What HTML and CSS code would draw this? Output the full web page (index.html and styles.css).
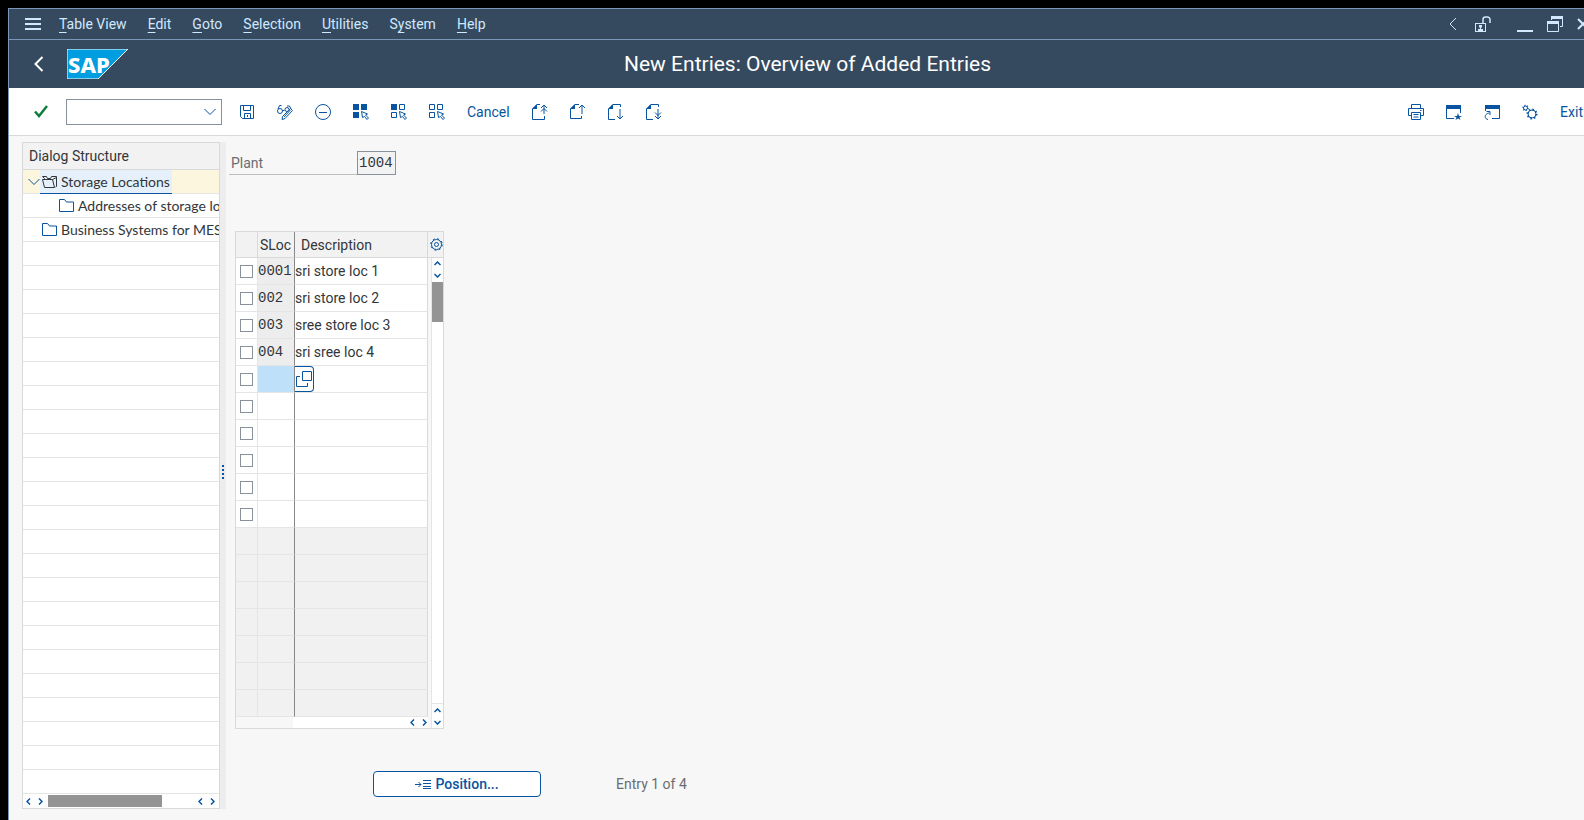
FILE: index.html
```html
<!DOCTYPE html>
<html lang="en">
<head>
<meta charset="utf-8">
<title>New Entries: Overview of Added Entries</title>
<link rel="stylesheet" href="styles.css">
</head>
<body>
<div class="window">
  <nav class="menubar">
    <button class="menu-toggle" aria-label="Menu"><svg width="16" height="12" viewBox="0 0 16 12"><path d="M0 1h16M0 6h16M0 11h16" stroke-width="2"/></svg></button>
    <button class="menu-item"><u>T</u>able View</button>
    <button class="menu-item"><u>E</u>dit</button>
    <button class="menu-item"><u>G</u>oto</button>
    <button class="menu-item"><u>S</u>election</button>
    <button class="menu-item"><u>U</u>tilities</button>
    <button class="menu-item">S<u>y</u>stem</button>
    <button class="menu-item"><u>H</u>elp</button>
    <div class="window-controls">
      <button aria-label="Collapse"><svg width="8" height="14" viewBox="0 0 8 14"><path d="M7 1L1 7l6 6"/></svg></button>
      <button class="lock" aria-label="Unlocked"><svg width="16" height="17" viewBox="0 0 16 17"><rect x=".5" y="7.5" width="10" height="8"/><path d="M8 7V3.500a2.500 2.500 0 0 1 2.500-2.500h2a2.500 2.500 0 0 1 2.500 2.500V7" stroke-width="1.500"/><path class="solid" d="M4 9h3v2.500H4zM3 13h5v2H3zM5 11h1v3H5z"/></svg></button>
      <button class="minimize" aria-label="Minimize"><svg width="16" height="17" viewBox="0 0 16 17"><path d="M0 15h16" stroke-width="2"/></svg></button>
      <button aria-label="Restore"><svg width="16" height="16" viewBox="0 0 16 16"><path d="M4 1.500h12" stroke-width="3"/><path d="M15.500 2v8.500H13M4.500 2v2"/><path d="M0 6.500h12" stroke-width="3"/><path d="M.5 7v8.500h11V7"/></svg></button>
      <button class="close" aria-label="Close"><svg width="12" height="12" viewBox="0 0 12 12"><path d="M1 1l10 10M11 1L1 11" stroke-width="2"/></svg></button>
    </div>
  </nav>

  <header class="titlebar">
    <button class="back" aria-label="Back"><svg width="10" height="16" viewBox="0 0 10 16"><path d="M8.500 1L1.500 8l7 7" stroke-width="2"/></svg></button>
    <svg class="logo" width="61" height="30" viewBox="0 0 61 30" role="img" aria-label="SAP"><path d="M0 0h61L31 30H0z" fill="#009de0"/><text x="1" y="24">SAP</text></svg>
    <h1>New Entries: Overview of Added Entries</h1>
  </header>

  <div class="toolbar">
    <button class="confirm" aria-label="Enter"><svg width="14" height="13" viewBox="0 0 14 13"><path d="M1 6.500l4 4.500L13 1" stroke-width="2.500"/></svg></button>
    <div class="command">
      <input type="text" aria-label="Command">
      <button aria-label="Show history"><svg width="12" height="8" viewBox="0 0 12 8"><path d="M.5 1L6 6.500 11.500 1"/></svg></button>
    </div>
    <button aria-label="Save"><svg width="16" height="16" viewBox="0 0 16 16"><path d="M1.500 1.500h13v13H3.500l-2-2zM4.500 1.500v5h7v-5M5.500 14.500v-5h6v5M8.500 11v2"/></svg></button>
    <button aria-label="Display/Change"><svg width="16" height="16" viewBox="0 0 16 16"><circle cx="3" cy="7" r="2.500"/><path d="M1 5l1.500-3.500h2M5.500 6.500h2M10 2h2.500L14 5"/><circle cx="10" cy="5.500" r="2"/><path d="M13.500 4.500l2 2-7.500 8-3 1 .5-3zM7 13l6.500-7"/></svg></button>
    <button aria-label="Delete"><svg width="16" height="16" viewBox="0 0 16 16"><circle cx="8" cy="8" r="7.500"/><path d="M4 8.500h8"/></svg></button>
    <button aria-label="Select All"><svg width="16" height="16" viewBox="0 0 16 16"><path class="solid" d="M0 0h6v6H0zM8 0h6v6H8zM0 8h6v6H0z"/><path d="M8.500 7.500l6 2.500-2 1 3 3-1.500 1.500-2.500-3-2 1z"/></svg></button>
    <button aria-label="Select Block"><svg width="16" height="16" viewBox="0 0 16 16"><path class="solid" d="M0 0h6v6H0z"/><path d="M8.500.5h5v5h-5zM.5 8.500h5v5h-5zM8.500 7.500l6 2.500-2 1 3 3-1.500 1.500-2.500-3-2 1z"/></svg></button>
    <button aria-label="Deselect All"><svg width="16" height="16" viewBox="0 0 16 16"><path d="M.5.500h5v5h-5zM8.500.5h5v5h-5zM.5 8.500h5v5h-5zM8.500 7.500l6 2.500-2 1 3 3-1.500 1.500-2.500-3-2 1z"/></svg></button>
    <button>Cancel</button>
    <button aria-label="First Page"><svg width="16" height="16" viewBox="0 0 16 16"><path class="solid" d="M0 5L5 0v5z"/><path d="M8 .5H5L.5 5v10.500h12V12M12 10V1M9 4l3-3 3 3M9 7.500l3-3 3 3"/></svg></button>
    <button aria-label="Previous Page"><svg width="16" height="16" viewBox="0 0 16 16"><path class="solid" d="M0 5L5 0v5z"/><path d="M9 .5H5L.5 5v9.500h11V12M12 10V1M9 4l3-3 3 3"/></svg></button>
    <button aria-label="Next Page"><svg width="16" height="16" viewBox="0 0 16 16"><path class="solid" d="M0 5L5 0v5z"/><path d="M12.500 3V.5H5L.5 5v10.500H7M12 5v10M9 12l3 3 3-3"/></svg></button>
    <button aria-label="Last Page"><svg width="16" height="16" viewBox="0 0 16 16"><path class="solid" d="M0 5L5 0v5z"/><path d="M12.500 3V.5H5L.5 5v10.500H7M12 5v10M9 12l3 3 3-3M9 8.500l3 3 3-3"/></svg></button>
    <div class="toolbar-end">
      <button aria-label="Print"><svg width="16" height="16" viewBox="0 0 16 16"><path d="M3.500 4V.5h9V4M3 11.500H.5v-7h15v7H13M3.500 8.500h9v7h-9zM5.500 10.500h5M5.500 13h5M12 6.500h1.500"/></svg></button>
      <button aria-label="New GUI Window"><svg width="16" height="16" viewBox="0 0 16 16"><path class="solid" d="M0 1h15v4H0zM12 9l1 3h3l-2.500 1.500 1 2.500-2.500-1.500L9.500 16l1-2.500L8 12h3z"/><path d="M.5 3v11.500H8M14.500 3v6"/></svg></button>
      <button aria-label="Create Shortcut"><svg width="16" height="16" viewBox="0 0 16 16"><path class="solid" d="M1 1h15v4H1z"/><path d="M1.500 3v4M15.500 3v11.500H8M4 15.500C1 15 .5 12 2 10.500c1-1 2-1.500 3.500-1.500M2.500 7.500h3.500V11"/></svg></button>
      <button aria-label="Customize Local Layout"><svg width="16" height="16" viewBox="0 0 16 16"><circle cx="10" cy="10" r="4"/><circle cx="10" cy="10" r="4.500" stroke-dasharray="1.500 2" stroke-width="2"/><circle cx="3.500" cy="4" r="2"/><circle cx="3.500" cy="4" r="2.500" stroke-dasharray="1 1.600" stroke-width="1.500"/></svg></button>
      <button>Exit</button>
    </div>
  </div>

  <main class="workspace">
    <aside class="structure">
      <h2>Dialog Structure</h2>
      <ul class="tree">
        <li class="node current">
          <button class="expander" aria-label="Collapse node"><svg width="12" height="8" viewBox="0 0 12 8"><path d="M.5 1L6 6.500 11.500 1"/></svg></button>
          <a class="selected" href="#"><svg width="15" height="13" viewBox="0 0 15 13"><path d="M2.500 5V3.500L.5 1.500h4l1 2h3l1-2h5v10l-1 .5M.5 4.500h10l2 8h-10zM10.500 4.500l4-2"/></svg>Storage Locations</a>
        </li>
        <li class="node child"><a href="#"><svg width="15" height="13" viewBox="0 0 15 13"><path d="M.5.500h5l2 2.500h7v9.500H.5z"/></svg>Addresses of storage locations</a></li>
        <li class="node leaf"><a href="#"><svg width="15" height="13" viewBox="0 0 15 13"><path d="M.5.500h5l2 2.500h7v9.500H.5z"/></svg>Business Systems for MES</a></li>
      </ul>
      <div class="hscroll">
        <button aria-label="Scroll left"><svg width="5" height="7" viewBox="0 0 5 7"><path d="M4 .5L1 3.500l3 3"/></svg></button>
        <button aria-label="Scroll right"><svg width="5" height="7" viewBox="0 0 5 7"><path d="M1 .5l3 3-3 3"/></svg></button>
        <div class="track"><div class="thumb"></div></div>
        <button aria-label="Scroll left"><svg width="5" height="7" viewBox="0 0 5 7"><path d="M4 .5L1 3.500l3 3"/></svg></button>
        <button aria-label="Scroll right"><svg width="5" height="7" viewBox="0 0 5 7"><path d="M1 .5l3 3-3 3"/></svg></button>
      </div>
    </aside>
    <div class="splitter"><svg width="2" height="14" viewBox="0 0 2 14"><path class="solid" d="M0 0h2v2H0zM0 4h2v2H0zM0 8h2v2H0zM0 12h2v2H0z"/></svg></div>

    <section class="content">
      <div class="field">
        <label for="plant">Plant</label>
        <input id="plant" type="text" value="1004" readonly>
      </div>

      <div class="grid">
        <div class="grid-main">
          <table>
            <thead><tr><th class="pick"></th><th class="sloc">SLoc</th><th class="desc">Description</th></tr></thead>
            <tbody>
              <tr class="filled"><td><input type="checkbox" aria-label="Select row 1"></td><td>0001</td><td>sri store loc 1</td></tr>
              <tr class="filled"><td><input type="checkbox" aria-label="Select row 2"></td><td>002</td><td>sri store loc 2</td></tr>
              <tr class="filled"><td><input type="checkbox" aria-label="Select row 3"></td><td>003</td><td>sree store loc 3</td></tr>
              <tr class="filled"><td><input type="checkbox" aria-label="Select row 4"></td><td>004</td><td>sri sree loc 4</td></tr>
              <tr class="active"><td><input type="checkbox" aria-label="Select row 5"></td><td></td><td><button class="value-help" aria-label="Value help"><svg width="16" height="16" viewBox="0 0 16 16"><path d="M6.500.5h9v9h-9zM4 5.500H.5v10h11V12"/></svg></button></td></tr>
              <tr><td><input type="checkbox" aria-label="Select row 6"></td><td></td><td></td></tr>
              <tr><td><input type="checkbox" aria-label="Select row 7"></td><td></td><td></td></tr>
              <tr><td><input type="checkbox" aria-label="Select row 8"></td><td></td><td></td></tr>
              <tr><td><input type="checkbox" aria-label="Select row 9"></td><td></td><td></td></tr>
              <tr><td><input type="checkbox" aria-label="Select row 10"></td><td></td><td></td></tr>
              <tr class="unused"><td></td><td></td><td></td></tr>
              <tr class="unused"><td></td><td></td><td></td></tr>
              <tr class="unused"><td></td><td></td><td></td></tr>
              <tr class="unused"><td></td><td></td><td></td></tr>
              <tr class="unused"><td></td><td></td><td></td></tr>
              <tr class="unused"><td></td><td></td><td></td></tr>
              <tr class="unused"><td></td><td></td><td></td></tr>
            </tbody>
          </table>
          <div class="grid-hscroll">
            <button aria-label="Scroll left"><svg width="5" height="7" viewBox="0 0 5 7"><path d="M4 .5L1 3.500l3 3"/></svg></button>
            <button aria-label="Scroll right"><svg width="5" height="7" viewBox="0 0 5 7"><path d="M1 .5l3 3-3 3"/></svg></button>
          </div>
        </div>
        <div class="grid-side">
          <button class="settings" aria-label="Table settings"><svg width="13" height="13" viewBox="0 0 13 13"><circle cx="6.500" cy="6.500" r="5"/><circle cx="6.500" cy="6.500" r="5.800" stroke-dasharray="2 2.560"/><circle cx="6.500" cy="6.500" r="2"/></svg></button>
          <div class="vscroll">
            <button aria-label="Scroll up"><svg width="7" height="5" viewBox="0 0 7 5"><path d="M.5 4l3-3 3 3"/></svg></button>
            <button aria-label="Scroll down"><svg width="7" height="5" viewBox="0 0 7 5"><path d="M.5 1l3 3 3-3"/></svg></button>
            <div class="vtrack"><div class="vthumb"></div></div>
            <button aria-label="Scroll up"><svg width="7" height="5" viewBox="0 0 7 5"><path d="M.5 4l3-3 3 3"/></svg></button>
            <button aria-label="Scroll down"><svg width="7" height="5" viewBox="0 0 7 5"><path d="M.5 1l3 3 3-3"/></svg></button>
          </div>
        </div>
      </div>

      <div class="footer">
        <button class="position"><svg width="16" height="9" viewBox="0 0 16 9"><path d="M0 4.500h6M3.500 2L6 4.500 3.500 7M8 .5h8M8 3.500h8M8 6.500h8M8 8.500h8"/></svg>Position...</button>
        <span>Entry 1 of 4</span>
      </div>
    </section>
  </main>
</div>
</body>
</html>
```
FILE: styles.css
```css
* { box-sizing: border-box; }

body {
  margin: 0;
  background: #000;
  color: #32363a;
  font: 14px/20px Roboto, "Noto Sans", sans-serif;
  overflow: hidden;
}

button {
  display: flex;
  align-items: center;
  justify-content: center;
  padding: 0;
  border: 0;
  background: none;
  color: inherit;
  font: inherit;
}

svg {
  display: block;
  flex: none;
  fill: none;
  stroke: currentColor;
}

.solid { fill: currentColor; stroke: none; }

/* The window runs past the right edge of the screen. */
.window {
  display: flex;
  flex-direction: column;
  min-height: calc(100vh - 8px);
  margin: 8px -22px 0 8px;
  border: solid #7a96b8;
  border-width: 1px 0 0 1px;
  background: #f7f7f7;
}

.menubar {
  display: flex;
  align-items: center;
  gap: 21px;
  height: 31px;
  padding: 0 17px 0 16px;
  border-bottom: 1px solid #7a96b8;
  background: #354a5f;
  color: #d1e8ff;
}

.menu-toggle { margin-right: -3px; }
.menu-item { display: block; white-space: nowrap; }
.menu-item u { text-underline-offset: 3px; }

.window-controls {
  display: flex;
  align-items: center;
  gap: 14px;
  margin-left: auto;
}

.lock { margin-left: 4px; }
.minimize { margin-left: 12px; }

.titlebar {
  display: grid;
  grid-template-columns: 25px 61px 1fr 119px;
  align-items: center;
  height: 48px;
  padding-left: 25px;
  column-gap: 8px;
  background: #354a5f;
  color: #fff;
}

.back { justify-content: flex-start; }

.logo text {
  fill: #fff;
  stroke: none;
  font: 800 22px "Noto Sans", "Open Sans", sans-serif;
}

.titlebar h1 {
  margin: 0;
  font-size: 21px;
  font-weight: 400;
  line-height: 24px;
  text-align: center;
}

.toolbar {
  display: flex;
  align-items: center;
  gap: 22px;
  height: 48px;
  padding: 0 23px 0 25px;
  border-bottom: 1px solid #d9d9d9;
  background: #fff;
  color: #0854a0;
}

.confirm { margin-right: -4px; color: #107e3e; }

.command {
  display: flex;
  width: 156px;
  height: 26px;
  margin-right: -5px;
  border: 1px solid #89919a;
}

.command input {
  flex: 1;
  min-width: 0;
  border: 0;
  background: none;
  font: inherit;
}

.command button { width: 22px; }

.toolbar-end {
  display: flex;
  gap: 22px;
  margin-left: auto;
}

.workspace {
  display: flex;
  flex: 1;
  padding: 6px 0 11px 13px;
}

.structure {
  display: flex;
  flex-direction: column;
  width: 198px;
  border: 1px solid #d9d9d9;
  background: #fff;
}

.structure h2 {
  height: 27px;
  margin: 0;
  padding-left: 6px;
  border-bottom: 1px solid #d9d9d9;
  background: #f2f2f2;
  font-size: 14px;
  font-weight: 400;
  line-height: 27px;
}

.tree {
  flex: 1;
  margin: 0;
  padding: 0;
  overflow: hidden;
  list-style: none;
  font-family: Lato, Roboto, sans-serif;
  background: repeating-linear-gradient(#fff 0 23px, #e5e5e5 23px 24px);
}

.node { display: flex; height: 24px; border-bottom: 1px solid #e5e5e5; }
.current { background: #fcf6df; }
.child { padding-left: 36px; }
.leaf { padding-left: 19px; }
.expander { width: 17px; padding-left: 5px; color: #0854a0; }

.node a {
  display: flex;
  align-items: center;
  gap: 4px;
  color: #32363a;
  text-decoration: none;
  white-space: nowrap;
}

.node a svg { color: #0854a0; }

.node .selected {
  height: 24px;
  padding: 0 2px;
  border-bottom: 1px solid #0854a0;
  background: #e5f0fa;
}

.node .selected svg { color: #32363a; }

.hscroll {
  display: flex;
  align-items: center;
  gap: 7px;
  height: 14px;
  padding: 0 4px 0 3px;
  color: #0854a0;
}

.track { flex: 1; height: 12px; margin-left: -2px; }
.thumb { width: 80%; height: 12px; background: #949494; }

.hscroll svg, .vscroll svg, .grid-hscroll svg { stroke-width: 1.5; }

.splitter {
  display: flex;
  align-items: center;
  justify-content: center;
  width: 6px;
  padding-bottom: 7px;
  background: #ededef;
  color: #0854a0;
}

.content { flex: 1; padding: 9px 0 0 3px; }

.field { display: flex; }

.field label {
  width: 128px;
  height: 24px;
  padding-left: 2px;
  border-bottom: 1px solid #bfbfbf;
  color: #6a6d70;
  line-height: 25px;
}

.field input {
  width: 39px;
  height: 24px;
  padding: 0 1px;
  border: 1px solid #89919a;
  background: #f2f2f2;
  color: #32363a;
  font: 14px "Liberation Mono", monospace;
}

.grid {
  display: flex;
  width: 209px;
  margin: 56px 0 0 6px;
  border: 1px solid #d9d9d9;
}

.grid-main { flex: 1; }

table { width: 100%; border-collapse: separate; border-spacing: 0; table-layout: fixed; }

th, td {
  height: 27px;
  padding: 0;
  border: solid #e5e5e5;
  border-width: 0 1px 1px 0;
  background: #fff;
  text-align: left;
  white-space: nowrap;
}

th {
  height: 26px;
  border-color: #d9d9d9;
  background: #f2f2f2;
  font-weight: 400;
}

.pick { width: 22px; }
.sloc { width: 37px; padding-left: 2px; }
.desc { padding-left: 6px; }

th:nth-child(2), td:nth-child(2) { border-right-color: #888; }
th:nth-child(3), td:nth-child(3) { border-right-color: #d9d9d9; }

td:nth-child(2) { font: 14px "Liberation Mono", monospace; }
.filled td:nth-child(2) { background: #ededed; }
.active td:nth-child(2) { background: #bfe0f9; }
.unused td { background: #f1f1f1; }

td input {
  display: block;
  width: 13px;
  height: 13px;
  margin: 0 auto;
  border: 1px solid #89919a;
  background: #fff;
  appearance: none;
}

.value-help {
  width: 19px;
  height: 26px;
  border: 1px solid #0854a0;
  border-left: 0;
  border-radius: 0 4px 4px 0;
  color: #0854a0;
}

.grid-hscroll {
  display: flex;
  align-items: center;
  justify-content: flex-end;
  gap: 7px;
  height: 11px;
  margin-left: 57px;
  padding-right: 1px;
  background: #fff;
  color: #0854a0;
}

.grid-side { display: flex; flex-direction: column; width: 15px; color: #0854a0; }

.settings {
  height: 26px;
  padding-left: 2px;
  border-bottom: 1px solid #d9d9d9;
  background: #f2f2f2;
}

.vscroll {
  display: flex;
  flex: 1;
  flex-direction: column;
  align-items: center;
  gap: 1px;
  margin-left: 3px;
  border-left: 1px solid #e5e5e5;
  background: #fff;
}

.vscroll button { width: 11px; height: 11px; }
.vtrack { flex: 1; width: 11px; border-bottom: 1px solid #e5e5e5; }
.vthumb { height: 40px; background: #949494; }

.footer {
  display: flex;
  align-items: center;
  gap: 75px;
  margin: 42px 0 0 144px;
  color: #6a6d70;
}

.position {
  gap: 4px;
  width: 168px;
  height: 26px;
  border: 1px solid #0854a0;
  border-radius: 4px;
  background: #fff;
  color: #0854a0;
  font-weight: 500;
}
```
